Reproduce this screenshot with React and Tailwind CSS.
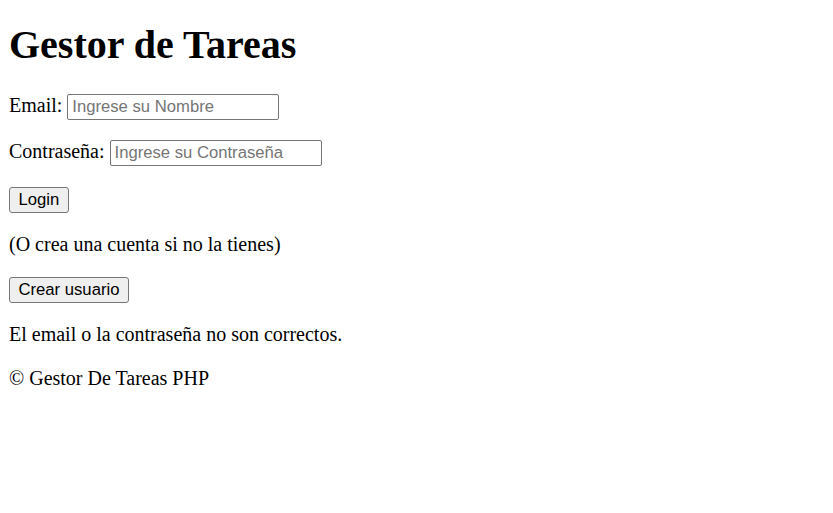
import React from 'react';

const serif = "font-['Liberation_Serif','Times_New_Roman',serif]";
const sans = "font-['Liberation_Sans',Arial,sans-serif]";

const Field = ({ label, placeholder, type = 'text', className = '' }) => (
  <div className={`flex items-start gap-[5px] ${className}`}>
    <label className="leading-[22px]">{label}</label>
    <input
      type={type}
      placeholder={placeholder}
      className={`w-[212px] h-[26px] px-[4px] border border-[#767676] rounded-[2px] bg-white text-[16.67px] ${sans} text-black placeholder:text-[#757575] outline-none`}
    />
  </div>
);

const Button = ({ children, className = '' }) => (
  <button
    type="button"
    className={`block h-[26px] px-[8.5px] border border-[#767676] rounded-[3px] bg-[#efefef] text-[16.67px] ${sans} text-black leading-none ${className}`}
  >
    {children}
  </button>
);

export default function App() {
  return (
    <div className={`${serif} min-h-[513px] bg-white text-black text-[20px] px-[9px] py-px`}>
      <h1 className="text-[40px] font-bold leading-[46px] mt-[21px]">Gestor de Tareas</h1>
      <form onSubmit={(e) => e.preventDefault()}>
        <Field label="Email:" placeholder="Ingrese su Nombre" className="mt-[26px]" />
        <Field label="Contraseña:" placeholder="Ingrese su Contraseña" type="password" className="mt-[20px]" />
        <Button className="mt-[21px]">Login</Button>
        <p className="mt-[20px] leading-[23px]">(O crea una cuenta si no la tienes)</p>
        <Button className="mt-[21px]">Crear usuario</Button>
      </form>
      <p className="mt-[20px] leading-[23px]">El email o la contraseña no son correctos.</p>
      <p className="mt-[21px] leading-[23px]">© Gestor De Tareas PHP</p>
    </div>
  );
}
